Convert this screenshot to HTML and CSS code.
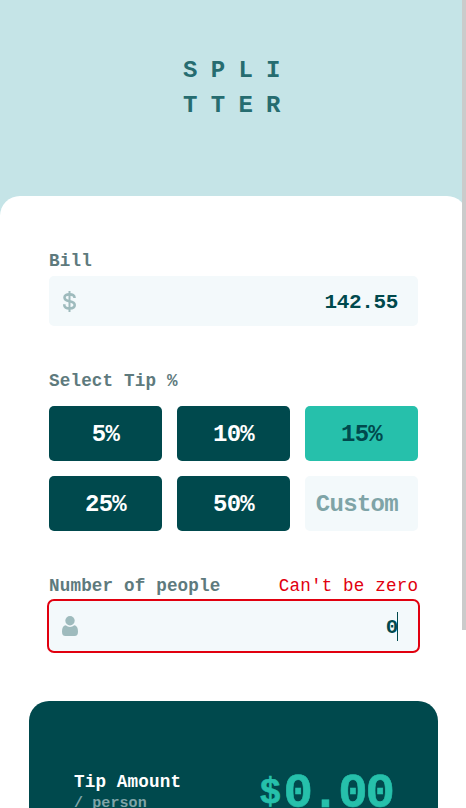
FILE: index.html
```html
<!DOCTYPE html>
<html lang="en">
<head>
<meta charset="utf-8">
<title>Splitter</title>
<link rel="stylesheet" href="styles.css">
</head>
<body>
<header class="logo"><span>SPLI</span><span>TTER</span></header>
<main class="sheet">
  <section class="field">
    <div class="label-row"><span class="label">Bill</span></div>
    <div class="input">
      <svg class="icon-dollar" width="13" height="21" viewBox="0 0 13 21" fill="none" stroke="#9ebbbd"><path stroke-width="2.600" d="M11.500 7V6.400C11.500 4.400 9.800 3.400 6.500 3.400S1.500 4.500 1.500 6.400c0 2.100 1.800 3.200 5 3.800 3.500.6 5.200 1.700 5.200 3.800 0 2.200-2 3.400-5.200 3.400S1.300 16.300 1.300 13.900v-.7"/><path stroke-width="2" d="M6.500 0v21"/></svg>
      <span class="value">142.55</span>
    </div>
  </section>
  <section class="tips">
    <div class="label-row"><span class="label">Select Tip %</span></div>
    <div class="grid">
      <button class="tip">5%</button>
      <button class="tip">10%</button>
      <button class="tip selected">15%</button>
      <button class="tip">25%</button>
      <button class="tip">50%</button>
      <button class="tip custom">Custom</button>
    </div>
  </section>
  <section class="field">
    <div class="label-row"><span class="label">Number of people</span><span class="label error">Can't be zero</span></div>
    <div class="input invalid">
      <svg class="icon-person" width="16" height="20" viewBox="0 0 16 20" fill="#9ebbbd"><circle cx="8" cy="4.800" r="4.700"/><path d="M3.900 9.300C5.100 10.500 6.500 11 8 11s2.900-.5 4.100-1.700C14.700 9.500 16 12 16 15.500 16 18.500 15 20 12.500 20h-9C1 20 0 18.500 0 15.500 0 12 1.300 9.500 3.900 9.300z"/></svg>
      <span class="value">0</span><span class="caret"></span>
    </div>
  </section>
  <section class="result">
    <div class="result-name"><span class="name">Tip Amount</span><span class="per">/ person</span></div>
    <span class="amount"><span class="currency">$</span>0.00</span>
  </section>
</main>
<div class="scrollbar"></div>
</body>
</html>
```
FILE: styles.css
```css
* { box-sizing: border-box; }
html { overflow: hidden; }
body {
  margin: 0;
  height: 808px;
  overflow: hidden;
  background: #c5e4e7;
  color: #00494d;
  font-family: "Liberation Mono", monospace;
  font-weight: 700;
}
.logo {
  height: 196px;
  padding: 53px 0 0 183px;
  display: flex;
  flex-direction: column;
  font-size: 24px;
  line-height: 35px;
  letter-spacing: 13.3px;
  color: #266c70;
}
.sheet {
  width: 467px;
  height: 612px;
  overflow: hidden;
  padding: 52px 49px 0;
  background: #fff;
  border-radius: 20px 20px 0 0;
}
.label-row {
  display: flex;
  justify-content: space-between;
  height: 28px;
  line-height: 26px;
}
.label {
  font-size: 17.6px;
  letter-spacing: 0.16px;
  color: #5e7a7d;
}
.error { color: #e1000f; font-weight: 400; margin-right: -0.16px; }
.input {
  display: flex;
  align-items: center;
  justify-content: space-between;
  height: 50px;
  padding: 0 20px 0 14px;
  border-radius: 5px;
  background: #f3f9fb;
}
.value {
  font-size: 21px;
  letter-spacing: -0.35px;
  line-height: 30px;
  margin-top: 4px;
}
.tips { margin-top: 42px; }
.tips .label-row { height: 38px; }
.grid {
  display: grid;
  grid-template-columns: repeat(3, 113px);
  grid-auto-rows: 55px;
  gap: 15px;
  margin-bottom: 42px;
}
.tip {
  border: 0;
  padding: 2px 0 0;
  border-radius: 5px;
  background: #00494d;
  color: #fff;
  font: inherit;
  font-size: 24px;
  letter-spacing: -0.7px;
  line-height: 53px;
}
.selected { background: #26c0ab; color: #00494d; }
.custom {
  background: #f3f9fb;
  color: #7fa4a7;
  text-align: right;
  padding-right: 20px;
}
.invalid {
  box-shadow: 0 0 0 2px #e1000f;
  padding-left: 13px;
}
.invalid .value { margin-left: auto; }
.caret {
  width: 1px;
  height: 29px;
  margin-left: -1px;
  background: #00494d;
}
.result {
  display: flex;
  justify-content: space-between;
  height: 260px;
  margin: 50px -20px 0;
  padding: 68px 45px 0;
  border-radius: 20px;
  background: #00494d;
}
.result-name {
  display: flex;
  flex-direction: column;
}
.name {
  color: #fff;
  font-size: 17.6px;
  letter-spacing: 0.16px;
  line-height: 26px;
}
.per {
  color: #7fa4a7;
  font-size: 15px;
  letter-spacing: 0.1px;
  line-height: 18px;
}
.amount {
  color: #26c0ab;
  font-size: 49px;
  letter-spacing: -2px;
  line-height: 50px;
  -webkit-text-stroke: 0.6px #26c0ab;
}
.currency {
  display: inline-block;
  width: 26px;
  font-size: 36px;
  line-height: 40px;
  text-align: center;
  letter-spacing: 0;
  vertical-align: 4px;
}
.scrollbar {
  position: fixed;
  top: 0;
  right: 0;
  width: 4px;
  height: 630px;
  background: #cbcbcb;
}
```
